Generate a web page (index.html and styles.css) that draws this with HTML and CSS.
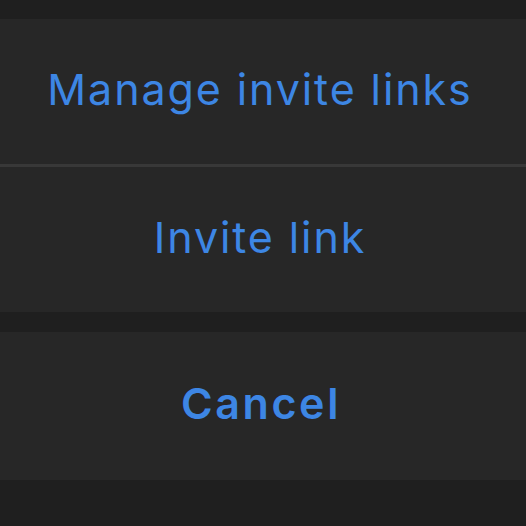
FILE: index.html
```html
<!DOCTYPE html>
<html lang="en">
<head>
  <meta charset="UTF-8">
  <meta name="viewport" content="width=device-width, initial-scale=1.0">
  <title>Invite links</title>
  <link rel="stylesheet" href="styles.css">
</head>
<body>
  <div class="sheet">
    <div class="group">
      <button class="action">Manage invite links</button>
      <button class="action">Invite link</button>
    </div>
    <div class="group">
      <button class="action cancel">Cancel</button>
    </div>
  </div>
</body>
</html>
```

FILE: styles.css
```css
* {
  margin: 0;
  padding: 0;
  box-sizing: border-box;
}

body {
  font-family: Inter, 'Noto Sans', sans-serif;
  background: #1f1f1f;
  width: 526px;
  height: 526px;
  overflow: hidden;
}

.sheet {
  display: flex;
  flex-direction: column;
  gap: 20px;
  padding-top: 19px;
}

.group {
  display: flex;
  flex-direction: column;
  background: #272727;
}

.action {
  height: 145px;
  display: flex;
  align-items: center;
  justify-content: center;
  padding-bottom: 6px;
  padding-right: 6px;
  background: none;
  border: none;
  font-family: inherit;
  font-size: 43px;
  font-weight: 400;
  letter-spacing: 1.9px;
  color: #3d86e4;
}

.action + .action {
  border-top: 3px solid #383838;
  height: 148px;
}

.cancel {
  height: 148px;
  padding-right: 4px;
  font-weight: 600;
  letter-spacing: 2.6px;
}
```
